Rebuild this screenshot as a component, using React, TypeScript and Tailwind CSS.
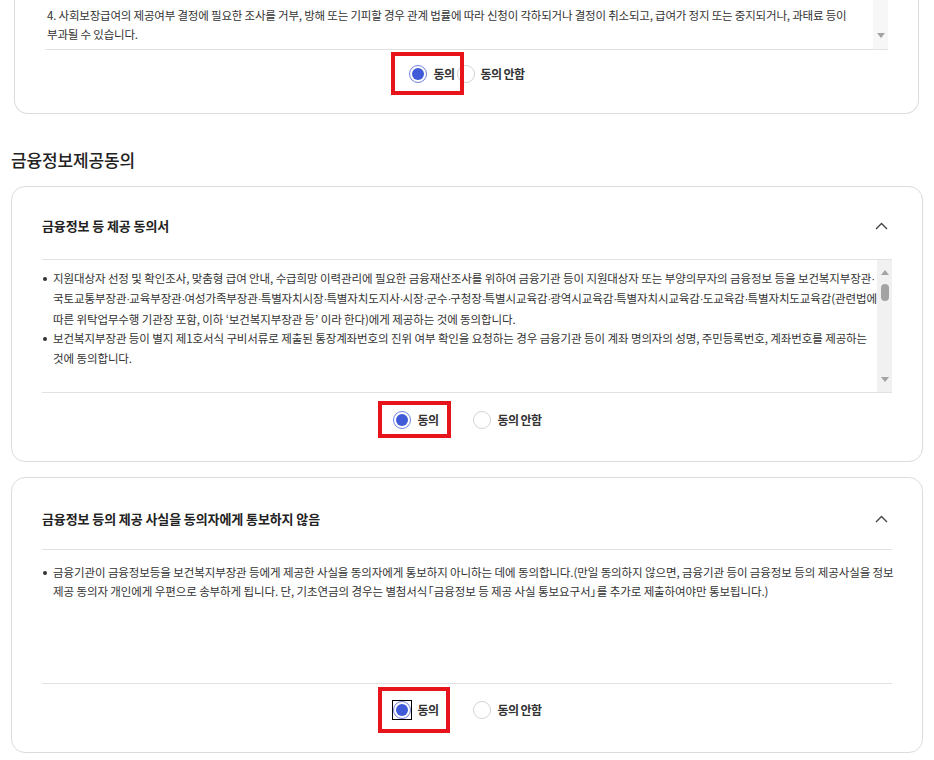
import React from "react";

const FONT = "font-['Noto_Sans_CJK_KR','Noto_Sans',sans-serif]";

function DownArrow() {
  return (
    <svg width="8" height="5" viewBox="0 0 8 5">
      <polygon points="0,0 8,0 4,5" fill="#a3a3a3" />
    </svg>
  );
}
function UpArrow() {
  return (
    <svg width="8" height="5" viewBox="0 0 8 5">
      <polygon points="0,5 8,5 4,0" fill="#a3a3a3" />
    </svg>
  );
}
function Chevron() {
  return (
    <svg width="13" height="8" viewBox="0 0 13 8" className="mr-[4px]">
      <polyline points="1,7 6.5,1.5 12,7" fill="none" stroke="#444" strokeWidth="1.4" />
    </svg>
  );
}

function Radio({ checked }: { checked: boolean }) {
  return checked ? (
    <span className="w-[18px] h-[18px] rounded-full border border-[#6f82e2] bg-white flex items-center justify-center shrink-0">
      <span className="w-[12px] h-[12px] rounded-full bg-[#3f5bd7]" />
    </span>
  ) : (
    <span className="w-[18px] h-[18px] rounded-full border border-[#d4d4d4] bg-white shrink-0" />
  );
}

function Line({ s }: { s: string }) {
  const parts = s.split("·");
  return (
    <div className="whitespace-nowrap">
      {parts.map((p, i) => (
        <React.Fragment key={i}>
          {p}
          {i < parts.length - 1 && (
            <span className="font-['Liberation_Sans',sans-serif] tracking-[-1px]">·</span>
          )}
        </React.Fragment>
      ))}
    </div>
  );
}

function Bullet({ lines }: { lines: React.ReactNode[] }) {
  return (
    <div className="flex">
      <div className="w-[10px] shrink-0 pt-[8px]">
        <div className="w-[4px] h-[4px] rounded-full bg-[#333]" />
      </div>
      <div className="flex-1 min-w-0">
        {lines.map((l, i) =>
          typeof l === "string" ? (
            <Line key={i} s={l} />
          ) : (
            <div key={i} className="whitespace-nowrap">
              {l}
            </div>
          )
        )}
      </div>
    </div>
  );
}

export default function App() {
  const bodyText = "text-[11.5px] leading-[19.4px] text-[#333] tracking-[-0.1px]";
  const labelText = "text-[12px] font-semibold text-[#333] tracking-[-0.6px] leading-[18px]";
  return (
    <div className={`${FONT} bg-white w-[934px] min-h-[760px] pb-[40px]`}>
      {/* Top (cut-off) card */}
      <div className="ml-[14px] mr-[15px] border border-t-0 border-[#dcdcdc] rounded-b-[14px] px-[30px] pb-[15px]">
        <div className="h-[50px] flex border-b border-[#e2e2e2]">
          <div className="flex-1 min-w-0 overflow-hidden pt-[6px] pl-[2px] text-[11.5px] leading-[19.4px] text-[#333] tracking-[-0.2px]">
            <Line s="4. 사회보장급여의 제공여부 결정에 필요한 조사를 거부, 방해 또는 기피할 경우 관계 법률에 따라 신청이 각하되거나 결정이 취소되고, 급여가 정지 또는 중지되거나, 과태료 등이" />
            <Line s="부과될 수 있습니다." />
          </div>
          <div className="w-[15px] bg-[#f7f7f7] flex flex-col justify-end items-center">
            <div className="h-[28px] flex items-center">
              <DownArrow />
            </div>
          </div>
        </div>
        <div className="h-[48px] flex items-center justify-center gap-[2px]">
          <div className="relative flex items-center gap-[7px]">
            <Radio checked />
            <span className={labelText}>동의</span>
            <span className="absolute -top-[13px] -bottom-[12px] -left-[18px] -right-[9px] border-4 border-[#e8141c] z-10" />
          </div>
          <div className="flex items-center gap-[6px]">
            <Radio checked={false} />
            <span className={labelText}>동의 안함</span>
          </div>
        </div>
      </div>

      {/* Heading */}
      <h2 className="mt-[34px] mb-[14px] ml-[11px] text-[17px] leading-[24px] font-medium text-[#222] tracking-[-0.15px]">
        금융정보제공동의
      </h2>

      {/* Card 2 */}
      <div className="mx-[11px] border border-[#dcdcdc] rounded-[14px] px-[30px] pb-[14px]">
        <div className="pt-[29px] pb-[23px] flex items-center justify-between">
          <span className="text-[13px] leading-[20px] font-bold text-[#222] tracking-[-0.1px]">
            금융정보 등 제공 동의서
          </span>
          <Chevron />
        </div>
        <div className="h-[134px] border-y border-[#e2e2e2] flex">
          <div className={`flex-1 min-w-0 overflow-hidden pt-[9px] pl-[1px] ${bodyText}`}>
            <Bullet
              lines={[
                "지원대상자 선정 및 확인조사, 맞춤형 급여 안내, 수급희망 이력관리에 필요한 금융재산조사를 위하여 금융기관 등이 지원대상자 또는 부양의무자의 금융정보 등을 보건복지부장관·",
                "국토교통부장관·교육부장관·여성가족부장관·특별자치시장·특별자치도지사·시장·군수·구청장·특별시교육감·광역시교육감·특별자치시교육감·도교육감·특별자치도교육감(관련법에",
                "따른 위탁업무수행 기관장 포함, 이하 ‘보건복지부장관 등’ 이라 한다)에게 제공하는 것에 동의합니다.",
              ]}
            />
            <Bullet
              lines={[
                "보건복지부장관 등이 별지 제1호서식 구비서류로 제출된 통장계좌번호의 진위 여부 확인을 요청하는 경우 금융기관 등이 계좌 명의자의 성명, 주민등록번호, 계좌번호를 제공하는",
                "것에 동의합니다.",
              ]}
            />
          </div>
          <div className="w-[15px] bg-[#f1f1f1] flex flex-col items-center">
            <div className="h-[24px] flex items-center">
              <UpArrow />
            </div>
            <div className="w-[8px] h-[17px] rounded-full bg-[#a3a3a3]" />
            <div className="flex-1" />
            <div className="h-[26px] flex items-center">
              <DownArrow />
            </div>
          </div>
        </div>
        <div className="h-[54px] flex items-center justify-center gap-[34px]">
          <div className="relative flex items-center gap-[7px]">
            <Radio checked />
            <span className={labelText}>동의</span>
            <span className="absolute -top-[10px] -bottom-[9px] -left-[15px] -right-[12px] border-4 border-[#e8141c] z-10" />
          </div>
          <div className="flex items-center gap-[7px]">
            <Radio checked={false} />
            <span className={labelText}>동의 안함</span>
          </div>
        </div>
      </div>

      {/* Card 3 */}
      <div className="mt-[15px] mx-[11px] border border-[#dcdcdc] rounded-[14px] px-[30px] pb-[16px]">
        <div className="pt-[31px] pb-[20px] flex items-center justify-between">
          <span className="text-[13px] leading-[20px] font-bold text-[#222] tracking-[-0.1px]">
            금융정보 등의 제공 사실을 동의자에게 통보하지 않음
          </span>
          <Chevron />
        </div>
        <div className="h-[135px] border-y border-[#e2e2e2]">
          <div className={`pt-[13px] pl-[1px] ${bodyText}`}>
            <Bullet
              lines={[
                "금융기관이 금융정보등을 보건복지부장관 등에게 제공한 사실을 동의자에게 통보하지 아니하는 데에 동의합니다.(만일 동의하지 않으면, 금융기관 등이 금융정보 등의 제공사실을 정보",
                <>
                  제공 동의자 개인에게 우편으로 송부하게 됩니다. 단, 기초연금의 경우는 별첨서식
                  <span className="ml-[-5px]">「</span>금융정보 등 제공 사실 통보요구서
                  <span className="mr-[-5px]">」</span>를 추가로 제출하여야만 통보됩니다.)
                </>,
              ]}
            />
          </div>
        </div>
        <div className="h-[52px] flex items-center justify-center gap-[34px]">
          <div className="relative flex items-center gap-[7px]">
            <span className="outline outline-1 outline-black flex">
              <Radio checked />
            </span>
            <span className={labelText}>동의</span>
            <span className="absolute -top-[14px] -bottom-[14px] -left-[15px] -right-[11px] border-4 border-[#e8141c] z-10" />
          </div>
          <div className="flex items-center gap-[7px]">
            <Radio checked={false} />
            <span className={labelText}>동의 안함</span>
          </div>
        </div>
      </div>
    </div>
  );
}
